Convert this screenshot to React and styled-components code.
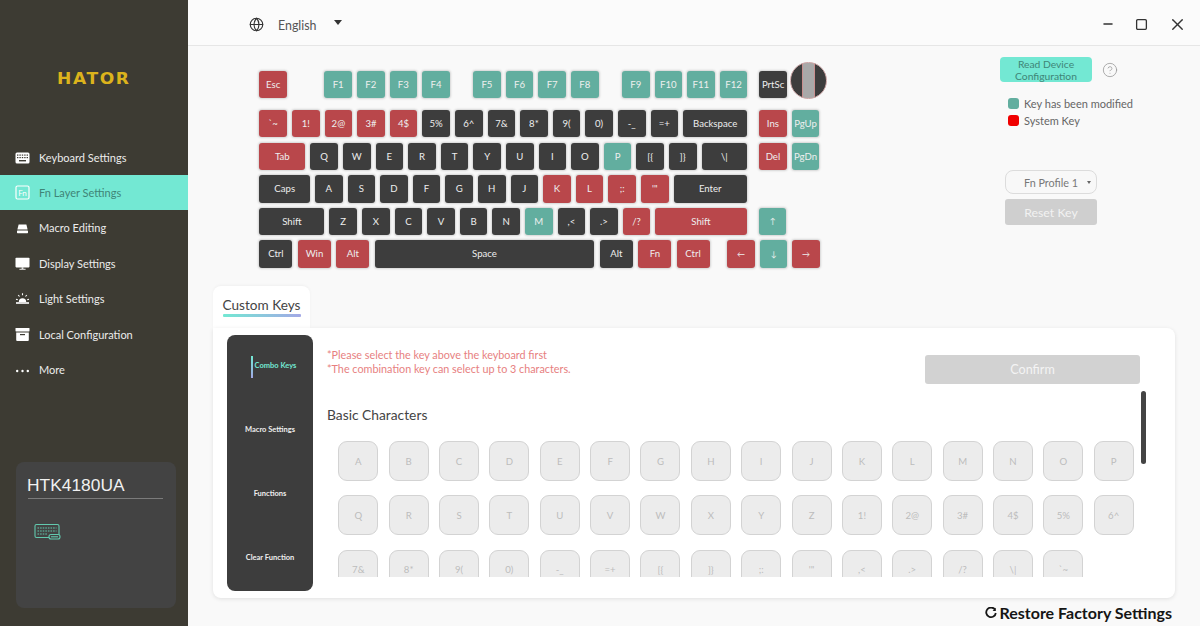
import React from 'react';
import styled, {createGlobalStyle} from 'styled-components';
import {Globe, Minus, Square, X, CircleHelp} from 'lucide-react';

const GlobalStyle = createGlobalStyle`
html, body {
    margin: 0;
    padding: 0;
    width: 100%;
    height: 100%;
    overflow: hidden;
    background: #f9f9f9;
}
* {
    box-sizing: border-box;
}
`;

const UI_FONT = 'Lato, "Noto Sans", sans-serif';
const MINT = '#73e8d3';
const KEY_COLORS = {
    red: '#b9474b',
    teal: '#62ae9f',
    dark: '#3d3d3d',
};

const Page = styled.div`
display: flex;
width: 1200px;
height: 626px;
overflow: hidden;
font-family: ${UI_FONT};
`;

const Sidebar = styled.aside`
width: 188px;
flex-shrink: 0;
display: flex;
flex-direction: column;
background: #3d3b33;
`;
const LogoBox = styled.div`
height: 139.5px;
padding-top: 69px;
padding-left: 56.5px;
`;
const Logo = styled.div`
font-family: "DejaVu Sans", sans-serif;
font-weight: 700;
font-size: 15px;
line-height: 20px;
letter-spacing: 1.4px;
color: #dcb31c;
transform: scaleX(1.14);
transform-origin: left center;
`;
const Nav = styled.nav`
display: flex;
flex-direction: column;
`;
const NavItem = styled.div`
height: 35.4px;
display: flex;
align-items: center;
gap: 9px;
padding-left: 15px;
font-size: 11px;
color: ${props => props.$active ? '#3f8577' : '#ececec'};
background: ${props => props.$active ? MINT : 'transparent'};
`;
const NavIcon = styled.svg`
width: 15px;
height: 15px;
flex-shrink: 0;
`;
const DeviceCard = styled.div`
margin: 75px 12px 0 16px;
height: 146px;
padding: 8px 13px 0 12px;
background: #434343;
border-radius: 8px;
`;
const DeviceName = styled.div`
font-family: "Liberation Sans", sans-serif;
font-size: 17.4px;
line-height: 30px;
height: 29px;
text-indent: -1px;
color: #f0f0f0;
border-bottom: 1px solid #7b7b7b;
`;
const DeviceIcon = styled.svg`
display: block;
width: 27px;
height: 18px;
margin: 24px 0 0 6px;
`;

const Main = styled.main`
flex: 1;
min-width: 0;
display: flex;
flex-direction: column;
background: #f9f9f9;
`;
const Header = styled.header`
height: 46px;
flex-shrink: 0;
display: flex;
align-items: center;
padding: 3px 13px 0 61px;
background: #fbfbfb;
border-bottom: 1px solid #e6e6e6;
color: #333;
`;
const Language = styled.span`
font-size: 12.4px;
color: #555;
margin: 2px 0 0 14px;
`;
const Caret = styled.span`
width: 0;
height: 0;
margin-left: 17px;
margin-bottom: 3px;
border-left: 4.5px solid transparent;
border-right: 4.5px solid transparent;
border-top: 5.5px solid #333;
`;
const WindowButtons = styled.div`
margin-left: auto;
display: flex;
align-items: center;
gap: 20px;
`;

const Upper = styled.section`
height: 240px;
flex-shrink: 0;
display: flex;
padding-left: 71.4px;
`;
const Keyboard = styled.div`
padding-top: 24.6px;
display: flex;
flex-direction: column;
gap: 5.2px;
`;
const KeyRow = styled.div`
display: flex;
align-items: center;
gap: 5px;
height: 27.4px;
margin-bottom: ${props => props.$spaced ? '6.8px' : '0'};
`;
const Key = styled.div`
width: ${props => props.$w || 27.6}px;
height: 27.4px;
flex-shrink: 0;
margin-left: ${props => props.$ml || 0}px;
display: flex;
align-items: center;
justify-content: center;
border-radius: 3px;
box-shadow: 0 0 2px 1px rgba(120, 120, 120, 0.28);
font-size: ${props => props.$fs || 9.6}px;
color: #eee;
background: ${props => KEY_COLORS[props.$c || 'dark']};
`;
const Knob = styled.div`
width: 37px;
height: 37px;
flex-shrink: 0;
margin: -7px 0 0 -2px;
border-radius: 50%;
border: 1px solid #c9a3a3;
background: linear-gradient(90deg, #3d3d3d 0 31%, #c98f8f 31% 33%, #a9a9a9 33% 67%, #c98f8f 67% 69%, #3d3d3d 69% 100%);
`;

const SideColumn = styled.div`
margin-left: auto;
width: 140px;
margin-right: 60px;
padding-top: 11px;
`;
const ReadRow = styled.div`
display: flex;
align-items: center;
gap: 10px;
color: #999;
`;
const ReadButton = styled.div`
width: 92px;
height: 25px;
display: flex;
align-items: center;
justify-content: center;
text-align: center;
border-radius: 4px;
background: ${MINT};
color: #3f8577;
font-size: 10.3px;
line-height: 12px;
`;
const Legend = styled.div`
display: flex;
align-items: center;
gap: 5px;
height: 17px;
padding-left: 8px;
font-size: 11px;
white-space: nowrap;
color: #666;
`;
const LegendList = styled.div`
margin-top: 13px;
`;
const Swatch = styled.span`
width: 11px;
height: 11px;
border-radius: 3px;
background: ${props => props.$color};
`;
const ProfileSelect = styled.div`
width: 92px;
height: 24px;
margin: 41px 0 0 5px;
display: flex;
align-items: center;
padding-left: 18px;
border: 1px solid #dcdcdc;
border-radius: 8px;
background: #f8f8f8;
font-size: 10.8px;
white-space: nowrap;
color: #777;
`;
const MiniCaret = styled.span`
width: 0;
height: 0;
margin-left: 9px;
border-left: 2.5px solid transparent;
border-right: 2.5px solid transparent;
border-top: 3px solid #666;
`;
const ResetButton = styled.div`
width: 92px;
height: 26px;
margin: 5px 0 0 5px;
display: flex;
align-items: center;
justify-content: center;
border-radius: 3px;
background: #cfcfcf;
color: #f2f2f2;
font-size: 12.3px;
`;

const Tab = styled.div`
width: 97px;
height: 42px;
margin-left: 25px;
padding: 10px 9.5px 0;
flex-shrink: 0;
background: #fff;
border-radius: 8px 8px 0 0;
text-align: center;
box-shadow: 0 -1px 3px rgba(0, 0, 0, 0.04);
`;
const TabLabel = styled.div`
font-size: 13.6px;
line-height: 18px;
white-space: nowrap;
color: #444;
&::after {
    content: '';
    display: block;
    height: 3px;
    border-radius: 1px;
    background: linear-gradient(90deg, ${MINT}, #a3a8e6);
}
`;
const Panel = styled.section`
position: relative;
width: 962px;
height: 270px;
flex-shrink: 0;
margin-left: 25px;
padding: 7px 35px 0 14px;
display: flex;
gap: 14px;
background: #fff;
border-radius: 0 8px 8px 8px;
box-shadow: 0 1px 4px rgba(0, 0, 0, 0.1);
`;
const Menu = styled.div`
width: 86px;
height: 256px;
flex-shrink: 0;
display: grid;
grid-auto-rows: 64px;
border-radius: 8px;
background: #3d3d3d;
`;
const MenuItem = styled.div`
position: relative;
display: flex;
align-items: center;
justify-content: center;
padding-bottom: 4px;
padding-left: ${props => props.$active ? '11px' : '0'};
font-size: 7.5px;
font-weight: 700;
color: ${props => props.$active ? MINT : '#eee'};
`;
const MenuBar = styled.span`
position: absolute;
left: 24px;
top: 21px;
width: 2px;
height: 22px;
background: linear-gradient(180deg, ${MINT}, #a3a8e6);
`;
const Body = styled.div`
flex: 1;
min-width: 0;
padding-top: 13px;
`;
const TopLine = styled.div`
display: flex;
justify-content: space-between;
height: 35px;
`;
const Notes = styled.div`
font-size: 10.8px;
line-height: 14.4px;
color: #e77f7f;
`;
const ConfirmButton = styled.div`
width: 215px;
height: 29px;
margin-top: 7px;
display: flex;
align-items: center;
justify-content: center;
border-radius: 3px;
background: #d2d2d2;
color: #f4f4f4;
font-size: 12.6px;
`;
const Title = styled.h3`
margin: 23px 0 0;
font-size: 13.8px;
font-weight: 400;
line-height: 18px;
color: #444;
`;
const KeyScroller = styled.div`
height: 136px;
margin-top: 17px;
padding-left: 11.3px;
overflow: hidden;
`;
const KeyGrid = styled.div`
display: grid;
grid-template-columns: repeat(16, 40px);
grid-auto-rows: 40px;
column-gap: 10.36px;
row-gap: 14.3px;
`;
const GreyKey = styled.div`
display: flex;
align-items: center;
justify-content: center;
border: 1.5px solid #d3d3d3;
border-radius: 9px;
background: #ececec;
font-size: 9.6px;
color: #bcbcbc;
`;
const ScrollThumb = styled.div`
position: absolute;
top: 63px;
right: 29px;
width: 5px;
height: 73px;
border-radius: 3px;
background: #444;
`;
const RestoreLine = styled.div`
display: flex;
align-items: center;
justify-content: flex-end;
gap: 2px;
padding: 5px 28px 0 0;
font-size: 16px;
line-height: 20px;
font-weight: 700;
color: #151515;
`;

const keyboardRows = [
    [
        {t: 'Esc', c: 'red'},
        {t: 'F1', c: 'teal', ml: 32.4}, {t: 'F2', c: 'teal'}, {t: 'F3', c: 'teal'}, {t: 'F4', c: 'teal'},
        {t: 'F5', c: 'teal', ml: 18.4}, {t: 'F6', c: 'teal'}, {t: 'F7', c: 'teal'}, {t: 'F8', c: 'teal'},
        {t: 'F9', c: 'teal', ml: 18.4}, {t: 'F10', c: 'teal'}, {t: 'F11', c: 'teal'}, {t: 'F12', c: 'teal'},
        {t: 'PrtSc', ml: 7}, {knob: true},
    ],
    [
        {t: '`~', c: 'red'}, {t: '1!', c: 'red'}, {t: '2@', c: 'red'}, {t: '3#', c: 'red'}, {t: '4$', c: 'red'},
        {t: '5%'}, {t: '6^'}, {t: '7&'}, {t: '8*'}, {t: '9('}, {t: '0)'}, {t: '-_'}, {t: '=+'},
        {t: 'Backspace', w: 64}, {t: 'Ins', c: 'red', ml: 7}, {t: 'PgUp', c: 'teal'},
    ],
    [
        {t: 'Tab', c: 'red', w: 46},
        ...'QWERTYUIO'.split('').map(t => ({t})),
        {t: 'P', c: 'teal'}, {t: '[{'}, {t: ']}'},
        {t: '\\|', w: 45.6}, {t: 'Del', c: 'red', ml: 7}, {t: 'PgDn', c: 'teal'},
    ],
    [
        {t: 'Caps', w: 50.6},
        ...'ASDFGHJ'.split('').map(t => ({t})),
        {t: 'K', c: 'red'}, {t: 'L', c: 'red'}, {t: ';:', c: 'red'}, {t: '\'"', c: 'red'},
        {t: 'Enter', w: 73.4},
    ],
    [
        {t: 'Shift', w: 65},
        ...'ZXCVBN'.split('').map(t => ({t})),
        {t: 'M', c: 'teal'}, {t: ',<'}, {t: '.>'}, {t: '/?', c: 'red'},
        {t: 'Shift', c: 'red', w: 91.4}, {t: '↑', c: 'teal', ml: 7, fs: 8},
    ],
    [
        {t: 'Ctrl', w: 33}, {t: 'Win', c: 'red', w: 33, ml: .6}, {t: 'Alt', c: 'red', w: 33, ml: .4},
        {t: 'Space', w: 219.4, ml: .4}, {t: 'Alt', w: 33, ml: .8}, {t: 'Fn', c: 'red', w: 33, ml: .4},
        {t: 'Ctrl', c: 'red', w: 33, ml: .2}, {t: '←', c: 'red', ml: 12.6, fs: 8},
        {t: '↓', c: 'teal', fs: 8}, {t: '→', c: 'red', fs: 8},
    ],
];

const greyKeys = [
    ...'ABCDEFGHIJKLMNOPQRSTUVWXYZ'.split(''),
    '1!', '2@', '3#', '4$', '5%', '6^', '7&', '8*', '9(', '0)', '-_', '=+', '[{', ']}', ';:', '\'"', ',<', '.>', '/?', '\\|', '`~',
];

const KeyboardGlyph = () => (
    <NavIcon viewBox="0 0 15 15">
        <rect x="0.5" y="2.5" width="14" height="11" rx="1.5" fill="#fff" />
        <g fill="#3d3b33">
            <rect x="2" y="4.5" width="1.4" height="1.2" /><rect x="4.4" y="4.5" width="1.4" height="1.2" />
            <rect x="6.8" y="4.5" width="1.4" height="1.2" /><rect x="9.2" y="4.5" width="1.4" height="1.2" />
            <rect x="11.6" y="4.5" width="1.4" height="1.2" />
            <rect x="2" y="7" width="1.4" height="1.2" /><rect x="4.4" y="7" width="1.4" height="1.2" />
            <rect x="6.8" y="7" width="1.4" height="1.2" /><rect x="9.2" y="7" width="1.4" height="1.2" />
            <rect x="11.6" y="7" width="1.4" height="1.2" />
            <rect x="4" y="10" width="7" height="1.4" />
        </g>
    </NavIcon>
);
const FnGlyph = () => (
    <NavIcon viewBox="0 0 15 15">
        <rect x="1" y="1" width="13" height="13" rx="1.5" fill="none" stroke="#fff" strokeWidth="1.2" />
        <text x="7.5" y="10.5" textAnchor="middle" fontSize="8" fontFamily={UI_FONT} fill="#fff">Fn</text>
    </NavIcon>
);
const MacroGlyph = () => (
    <NavIcon viewBox="0 0 15 15">
        <path d="M3.6 4.5h7.8l1.2 5H2.4z" fill="#fff" />
        <rect x="2" y="10.4" width="11" height="2.8" rx=".6" fill="#fff" />
    </NavIcon>
);
const DisplayGlyph = () => (
    <NavIcon viewBox="0 0 15 15">
        <rect x="0.5" y="1.8" width="14" height="9.6" rx=".8" fill="#fff" />
        <rect x="6.6" y="11.4" width="1.8" height="1.4" fill="#fff" />
        <rect x="4.4" y="12.8" width="6.2" height=".9" fill="#fff" />
    </NavIcon>
);
const LightGlyph = () => (
    <NavIcon viewBox="0 0 15 15">
        <path d="M3.8 11a3.7 3.7 0 0 1 7.4 0z" fill="#fff" />
        <rect x="1" y="11.2" width="13" height="1.6" fill="#fff" />
        <path d="M7.5 2.2v2M3.2 4l1.3 1.5M11.8 4l-1.3 1.5M1 8.2l1.8.5M14 8.2l-1.8.5" stroke="#fff" strokeWidth="1.1" fill="none" />
    </NavIcon>
);
const ArchiveGlyph = () => (
    <NavIcon viewBox="0 0 15 15">
        <rect x="0.5" y="1" width="14" height="3.4" rx=".6" fill="#fff" />
        <path d="M1.2 5.4h12.6v7.6a1 1 0 0 1-1 1H2.2a1 1 0 0 1-1-1z" fill="#fff" />
        <rect x="5" y="7" width="5" height="1.2" fill="#3d3b33" />
    </NavIcon>
);
const MoreGlyph = () => (
    <NavIcon viewBox="0 0 15 15">
        <circle cx="2.2" cy="9" r="1.2" fill="#fff" />
        <circle cx="7.5" cy="9" r="1.2" fill="#fff" />
        <circle cx="12.8" cy="9" r="1.2" fill="#fff" />
    </NavIcon>
);

const navItems = [
    {label: 'Keyboard Settings', Icon: KeyboardGlyph},
    {label: 'Fn Layer Settings', Icon: FnGlyph, active: true},
    {label: 'Macro Editing', Icon: MacroGlyph},
    {label: 'Display Settings', Icon: DisplayGlyph},
    {label: 'Light Settings', Icon: LightGlyph},
    {label: 'Local Configuration', Icon: ArchiveGlyph},
    {label: 'More', Icon: MoreGlyph},
];

const menuItems = ['Combo Keys', 'Macro Settings', 'Functions', 'Clear Function'];

const App = () => {
    return (
        <Page>
            <GlobalStyle />
            <Sidebar>
                <LogoBox><Logo>HATOR</Logo></LogoBox>
                <Nav>
                    {navItems.map(({label, Icon, active}) => (
                        <NavItem key={label} $active={active}><Icon />{label}</NavItem>
                    ))}
                </Nav>
                <DeviceCard>
                    <DeviceName>HTK4180UA</DeviceName>
                    <DeviceIcon viewBox="0 0 27 18" fill="none" stroke="#62c9ae" strokeWidth="1.1">
                        <rect x="1" y="1.5" width="24" height="13" rx="1.5" />
                        <path d="M3.5 5h19M3.5 8h19M3.5 11h10" strokeDasharray="1.6 1" />
                        <rect x="15" y="11.5" width="11" height="4.5" rx="2" fill="#434343" />
                        <path d="M17 13.8h7" />
                    </DeviceIcon>
                </DeviceCard>
            </Sidebar>
            <Main>
                <Header>
                    <Globe size={15} strokeWidth={1.8} />
                    <Language>English</Language>
                    <Caret />
                    <WindowButtons>
                        <Minus size={14} strokeWidth={2.2} />
                        <Square size={13} strokeWidth={2.4} />
                        <X size={19} strokeWidth={1.7} />
                    </WindowButtons>
                </Header>
                <Upper>
                    <Keyboard>
                        {keyboardRows.map((row, i) => (
                            <KeyRow key={i} $spaced={i === 0}>
                                {row.map((key, j) => key.knob
                                    ? <Knob key={j} />
                                    : <Key key={j} $c={key.c} $w={key.w} $ml={key.ml} $fs={key.fs}>{key.t}</Key>)}
                            </KeyRow>
                        ))}
                    </Keyboard>
                    <SideColumn>
                        <ReadRow>
                            <ReadButton>Read Device Configuration</ReadButton>
                            <CircleHelp size={16} strokeWidth={1.2} />
                        </ReadRow>
                        <LegendList>
                            <Legend><Swatch $color="#62ae9f" />Key has been modified</Legend>
                            <Legend><Swatch $color="#f00000" />System Key</Legend>
                        </LegendList>
                        <ProfileSelect>Fn Profile 1<MiniCaret /></ProfileSelect>
                        <ResetButton>Reset Key</ResetButton>
                    </SideColumn>
                </Upper>
                <Tab><TabLabel>Custom Keys</TabLabel></Tab>
                <Panel>
                    <Menu>
                        {menuItems.map((item, i) => (
                            <MenuItem key={item} $active={i === 0}>
                                {i === 0 && <MenuBar />}
                                {item}
                            </MenuItem>
                        ))}
                    </Menu>
                    <Body>
                        <TopLine>
                            <Notes>
                                *Please select the key above the keyboard first<br />
                                *The combination key can select up to 3 characters.
                            </Notes>
                            <ConfirmButton>Confirm</ConfirmButton>
                        </TopLine>
                        <Title>Basic Characters</Title>
                        <KeyScroller>
                            <KeyGrid>
                                {greyKeys.map(k => <GreyKey key={k}>{k}</GreyKey>)}
                            </KeyGrid>
                        </KeyScroller>
                    </Body>
                    <ScrollThumb />
                </Panel>
                <RestoreLine>
                    <svg width="12" height="12" viewBox="0 0 12 12" fill="none">
                        <path d="M10 2.6A4.8 4.8 0 1 0 10.8 6" stroke="#151515" strokeWidth="1.8" />
                        <path d="M10.8.8v3.2H7.6z" fill="#151515" />
                    </svg>
                    Restore Factory Settings
                </RestoreLine>
            </Main>
        </Page>
    );
};

export default App;
